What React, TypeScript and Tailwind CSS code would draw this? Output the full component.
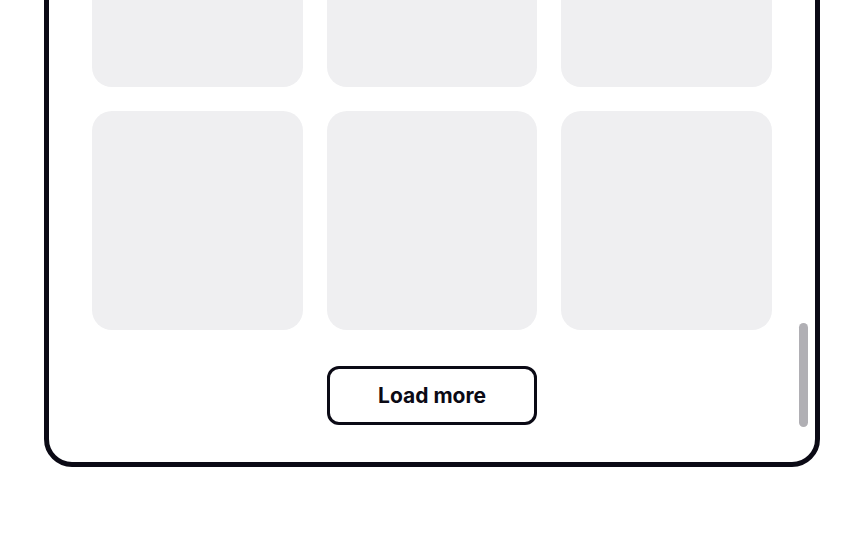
export default function App() {
  const cards = Array.from({ length: 9 }, (_, i) => i)

  return (
    <div className="h-[540px] w-[864px] overflow-hidden bg-white flex flex-col justify-end pb-[73px]" style={{ fontFamily: 'Inter, "Liberation Sans", sans-serif' }}>
      <div className="relative ml-[44px] w-[776px] shrink-0 border-[5px] border-[#0b0a15] rounded-b-[28px] bg-white">
        <div className="px-[43px] grid grid-cols-3 gap-6">
          {cards.map(c => (
            <div key={c} className="h-[219px] rounded-[20px] bg-[#efeff1]" />
          ))}
        </div>

        <div className="flex justify-center mt-9 pb-[37px]">
          <button className="w-[210px] h-[59px] border-[3px] border-[#0b0a15] rounded-[12px] bg-white text-[21px] font-bold text-[#0b0a15]">
            Load more
          </button>
        </div>

        <div className="absolute right-[7px] bottom-[35px] w-[9px] h-[104px] rounded-full bg-[#b0afb4]" />
      </div>
    </div>
  )
}
